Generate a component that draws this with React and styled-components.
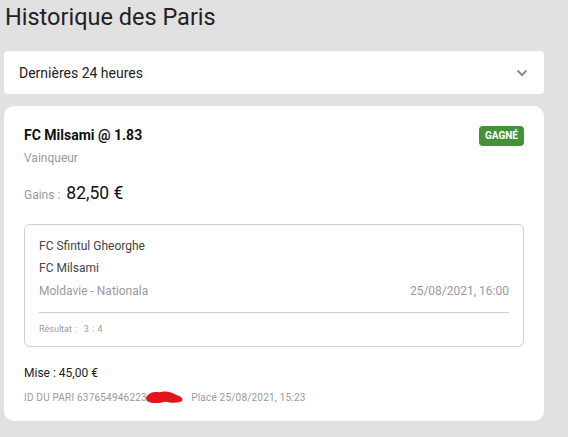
import React from 'react';
import styled, { createGlobalStyle } from 'styled-components';

const GlobalStyle = createGlobalStyle`
  body {
    margin: 0;
    background: #e1e1e1;
    font-family: Roboto, "Liberation Sans", sans-serif;
  }
`

const Page = styled.div`
  width: 540px;
  padding: 0 0 16px 4px;
`
const Title = styled.h1`
  font-size: 23.5px;
  font-weight: 400;
  color: #222;
  margin: 0 0 0 1px;
  height: 51px;
  line-height: 34px;
`
const Select = styled.div`
  height: 43px;
  background: #fff;
  border-radius: 4px;
  display: flex;
  align-items: center;
  justify-content: space-between;
  padding: 0 16px 0 15px;
  font-size: 14px;
  color: #222;
  margin-bottom: 12px;
`
const Card = styled.div`
  background: #fff;
  border-radius: 10px;
  padding: 20px 20px 20px 20px;
  box-sizing: border-box;
  height: 315px;
`
const Header = styled.div`
  display: flex;
  justify-content: space-between;
  align-items: flex-start;
`
const Selection = styled.div`
  font-size: 14px;
  font-weight: 700;
  color: #111;
  margin-top: 1px;
`
const Badge = styled.span`
  background: #43923a;
  color: #fff;
  font-size: 10px;
  font-weight: 700;
  border-radius: 4px;
  padding: 0 6px;
  height: 20px;
  line-height: 20px;
`
const Muted = styled.div`
  font-size: ${p => p.size || 12}px;
  color: ${p => p.color || '#9a9a9a'};
  margin-top: ${p => p.top || 0}px;
`
const Gains = styled.div`
  display: flex;
  align-items: baseline;
  gap: 6px;
  margin-top: 18px;
  font-size: 12px;
  color: #9a9a9a;
`
const Amount = styled.span`
  font-size: 17.5px;
  color: #111;
`
const Event = styled.div`
  margin-top: 21px;
  border: 1px solid #cfcfcf;
  border-radius: 6px;
  padding: 10px 14px 0 14px;
  height: 123px;
  box-sizing: border-box;
`
const Team = styled.div`
  font-size: 12px;
  color: #444;
  line-height: 22px;
`
const Row = styled.div`
  display: flex;
  justify-content: space-between;
  font-size: 12px;
  color: #9a9a9a;
  line-height: 24px;
  padding-bottom: 9px;
  border-bottom: 1px solid #cfcfcf;
`
const Result = styled.div`
  font-size: 9px;
  color: #9a9a9a;
  margin-top: 11px;
  word-spacing: 1px;
`
const Stake = styled.div`
  font-size: 12px;
  color: #222;
  margin-top: 19px;
`
const Meta = styled.div`
  display: flex;
  align-items: center;
  font-size: 10px;
  letter-spacing: 0.2px;
  color: #9a9a9a;
  margin-top: 9px;
`
const Blot = styled.svg`
  margin: 0 0 0 -3px;
  flex: none;
`

function Chevron() {
  return (
    <svg width="12" height="8" viewBox="0 0 12 8">
      <path d="M1.5 1.5 L6 6 L10.5 1.5" fill="none" stroke="#8a8a8a" strokeWidth="2" />
    </svg>
  )
}

export default function App() {
  return (
    <>
      <GlobalStyle />
      <Page>
        <Title>Historique des Paris</Title>
        <Select>
          <span>Dernières 24 heures</span>
          <Chevron />
        </Select>
        <Card>
          <Header>
            <Selection>FC Milsami @ 1.83</Selection>
            <Badge>GAGNÉ</Badge>
          </Header>
          <Muted top={5}>Vainqueur</Muted>
          <Gains>
            <span>Gains :</span>
            <Amount>82,50 €</Amount>
          </Gains>
          <Event>
            <Team>FC Sfintul Gheorghe</Team>
            <Team>FC Milsami</Team>
            <Row>
              <span>Moldavie - Nationala</span>
              <span>25/08/2021, 16:00</span>
            </Row>
            <Result>Résultat :&nbsp; 3 : 4</Result>
          </Event>
          <Stake>Mise : 45,00 €</Stake>
          <Meta>
            <span>ID DU PARI 637654946223</span>
            <Blot width="42" height="16" viewBox="0 0 44 16">
              <path d="M2 9 C4 4 10 2 16 3 C22 1 30 3 34 6 C38 7 41 9 40 12 C36 15 28 14 22 13 C15 15 6 15 3 12 Z" fill="#e3151a" />
            </Blot>
            <span>&nbsp;&nbsp;Placé 25/08/2021, 15:23</span>
          </Meta>
        </Card>
      </Page>
    </>
  )
}
